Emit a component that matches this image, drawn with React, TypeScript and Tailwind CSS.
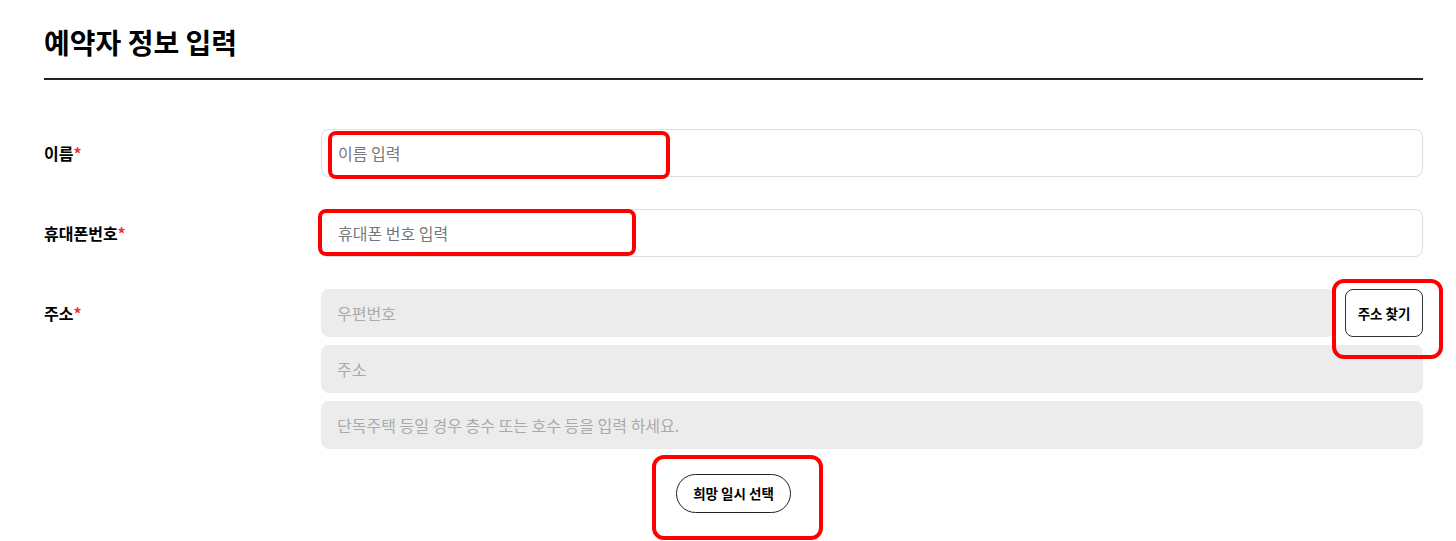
export default function App() {
  const font = { fontFamily: '"Noto Sans CJK KR", "Noto Sans", sans-serif' };
  return (
    <div className="relative min-h-[541px] w-[1456px] bg-white text-black" style={font}>
      <div className="ml-[44px] w-[1379px]">
        <h1 className="pt-[22px] pb-[16px] text-[28px] font-bold leading-[40px]">예약자 정보 입력</h1>
        <div className="h-[2px] bg-[#222]" />

        <div className="mt-[49px] flex flex-col">
          <div className="flex items-center">
            <label className="w-[277px] text-[16px] font-bold">
              이름<span className="text-[#e33]">*</span>
            </label>
            <input
              placeholder="이름 입력"
              className="h-[48px] flex-1 rounded-[8px] border border-[#ddd] px-[16px] text-[16px] text-[#333] placeholder:text-[#777] outline-none"
            />
          </div>

          <div className="mt-[32px] flex items-center">
            <label className="w-[277px] text-[16px] font-bold">
              휴대폰번호<span className="text-[#e33]">*</span>
            </label>
            <input
              placeholder="휴대폰 번호 입력"
              className="h-[48px] flex-1 rounded-[8px] border border-[#ddd] px-[16px] text-[16px] text-[#333] placeholder:text-[#777] outline-none"
            />
          </div>

          <div className="mt-[32px] flex items-start">
            <label className="w-[277px] pt-[12px] text-[16px] font-bold">
              주소<span className="text-[#e33]">*</span>
            </label>
            <div className="flex flex-1 flex-col gap-[8px]">
              <div className="flex gap-[10px]">
                <input
                  placeholder="우편번호"
                  disabled
                  className="h-[48px] flex-1 rounded-[8px] bg-[#ececec] px-[16px] text-[16px] placeholder:text-[#aaa] outline-none"
                />
                <button className="h-[48px] w-[78px] rounded-[8px] border border-[#333] bg-white text-[13.5px] font-bold">
                  주소 찾기
                </button>
              </div>
              <input
                placeholder="주소"
                disabled
                className="h-[48px] rounded-[8px] bg-[#ececec] px-[16px] text-[16px] placeholder:text-[#aaa] outline-none"
              />
              <input
                placeholder="단독주택 등일 경우 층수 또는 호수 등을 입력 하세요."
                disabled
                className="h-[48px] rounded-[8px] bg-[#ececec] px-[16px] text-[16px] placeholder:text-[#aaa] outline-none"
              />
            </div>
          </div>

          <div className="mt-[25px] flex justify-center">
            <button className="h-[39px] w-[115px] rounded-full border border-[#222] bg-white text-[13.5px] font-bold">
              희망 일시 선택
            </button>
          </div>
        </div>
      </div>

      {/* annotation marks */}
      <div className="pointer-events-none absolute left-[328px] top-[131px] h-[48px] w-[342px] rounded-[8px] border-[4px] border-[#ff0000]" />
      <div className="pointer-events-none absolute left-[318px] top-[209px] h-[47px] w-[318px] rounded-[8px] border-[4px] border-[#ff0000]" />
      <div className="pointer-events-none absolute left-[1332px] top-[279px] h-[80px] w-[111px] rounded-[12px] border-[4px] border-[#ff0000]" />
      <div className="pointer-events-none absolute left-[652px] top-[455px] h-[85px] w-[171px] rounded-[12px] border-[4px] border-[#ff0000]" />
    </div>
  );
}
